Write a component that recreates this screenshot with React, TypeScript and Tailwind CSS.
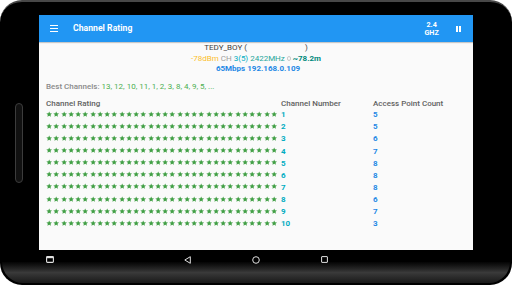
import React from "react";

const counts = [5, 5, 6, 7, 8, 8, 8, 6, 7, 3];

function Star() {
  return (
    <span className="w-[7.25px] shrink-0 flex items-center">
      <svg width="6.4" height="6.4" viewBox="0 0 24 24">
        <path
          d="M12 1.5l3.1 7.1 7.7.7-5.8 5.1 1.7 7.6L12 18l-6.7 4 1.7-7.6-5.8-5.1 7.7-.7z"
          fill="#43a047"
        />
      </svg>
    </span>
  );
}

function Stars() {
  return (
    <div className="w-[231px] overflow-hidden flex">
      {Array.from({ length: 33 }).map((_, i) => (
        <Star key={i} />
      ))}
    </div>
  );
}

export default function App() {
  return (
    <div
      className="relative w-[512px] h-[285px] bg-white overflow-hidden"
      style={{ fontFamily: "Roboto, 'Noto Sans', sans-serif" }}
    >
      <div className="relative h-[285px] rounded-[22px] bg-black border-t-[2px] border-[#474747]">
        {/* bottom bezel */}
        <div className="absolute left-[2px] right-[2px] bottom-[2px] h-[21px] rounded-b-[22px] bg-gradient-to-b from-[#050505] via-[#3a3a3a] to-[#1a1a1a]" />
        {/* side button */}
        <div className="absolute left-[15px] top-[101px] w-[8px] h-[80px] rounded-[4px] border border-[#3c3c3c] bg-[#111]" />

        <div className="relative pt-[13px] pl-[39px]">
          <div className="w-[434px] flex flex-col">
            {/* app bar */}
            <div className="h-[27px] bg-[#2196f3] flex items-center shadow-[0_1px_1px_rgba(0,0,0,0.2)] relative z-10">
              <div className="ml-[11px] w-[8px] flex flex-col gap-[1.5px]">
                <div className="h-[1.3px] bg-white" />
                <div className="h-[1.3px] bg-white" />
                <div className="h-[1.3px] bg-white" />
              </div>
              <div className="ml-[15px] text-white font-bold text-[8.6px] tracking-[0.05px]">
                Channel Rating
              </div>
              <div className="ml-auto flex flex-col items-center text-white font-bold text-[7.2px] leading-[8px] mr-[17px]">
                <span>2.4</span>
                <span>GHZ</span>
              </div>
              <div className="flex gap-[1.6px] mr-[12px]">
                <div className="w-[1.8px] h-[6px] bg-white" />
                <div className="w-[1.8px] h-[6px] bg-white" />
              </div>
            </div>

            {/* content */}
            <div className="h-[208px] bg-[#fafafa] px-[7px] pt-[1px] text-[8px] leading-[10.5px]">
              <div className="text-center text-[#424242]">
                TEDY_BOY (<span className="inline-block w-[58px]" />)
              </div>
              <div className="text-center">
                <span className="text-[#fbc02d]">-78dBm</span>{" "}
                <span className="text-[#9e9e9e]">CH</span>{" "}
                <span className="text-[#00acc1]">3(5)</span>{" "}
                <span className="text-[#26a69a]">2422MHz</span>{" "}
                <svg className="inline-block align-[-0.5px]" width="4" height="5" viewBox="0 0 4 5">
                  <rect x="0.5" y="0.5" width="3" height="4" rx="1.5" fill="none" stroke="#c0c0c0" strokeWidth="0.8" />
                </svg>{" "}
                <span className="text-[#00897b] font-bold">~78.2m</span>
              </div>
              <div className="text-center text-[#1e88e5] font-bold pl-[4px]">
                65Mbps 192.168.0.109
              </div>
              <div className="mt-[7px] text-[#8a8a8a]">
                <span className="font-medium">Best Channels: </span>
                <span className="text-[#4caf50]">13, 12, 10, 11, 1, 2, 3, 8, 4, 9, 5, ...</span>
              </div>
              <div className="mt-[6.5px] flex text-[#616161] font-medium h-[10px] leading-[10px]">
                <div className="w-[235px]">Channel Rating</div>
                <div className="w-[92px]">Channel Number</div>
                <div>Access Point Count</div>
              </div>
              <div className="mt-[-0.5px]">
                {counts.map((c, i) => (
                  <div key={i} className="flex h-[12.1px] items-center">
                    <div className="w-[235px]">
                      <Stars />
                    </div>
                    <div className="w-[92px] text-[#00acc1] font-bold pt-[3px]">{i + 1}</div>
                    <div className="text-[#1e88e5] font-bold pt-[3px]">{c}</div>
                  </div>
                ))}
              </div>
            </div>

            {/* nav bar */}
            <div className="h-[19px] flex items-center">
              <svg className="ml-[7px]" width="8" height="7" viewBox="0 0 8 7">
                <rect x="0.6" y="0.6" width="6.8" height="5.8" rx="0.8" fill="none" stroke="#e0e0e0" strokeWidth="1.1" />
                <rect x="0.6" y="0.6" width="6.8" height="1.6" fill="#e0e0e0" />
              </svg>
              <svg className="ml-[130px]" width="7" height="8" viewBox="0 0 7 8">
                <path d="M6.3 0.7 L0.8 4 L6.3 7.3 Z" fill="none" stroke="#e0e0e0" strokeWidth="1" strokeLinejoin="round" />
              </svg>
              <svg className="ml-[61px]" width="8" height="8" viewBox="0 0 8 8">
                <circle cx="4" cy="4" r="3.3" fill="none" stroke="#e0e0e0" strokeWidth="1" />
              </svg>
              <svg className="ml-[61px]" width="7" height="7" viewBox="0 0 7 7">
                <rect x="0.6" y="0.6" width="5.8" height="5.8" rx="0.4" fill="none" stroke="#e0e0e0" strokeWidth="1" />
              </svg>
            </div>
          </div>
        </div>
      </div>
    </div>
  );
}
